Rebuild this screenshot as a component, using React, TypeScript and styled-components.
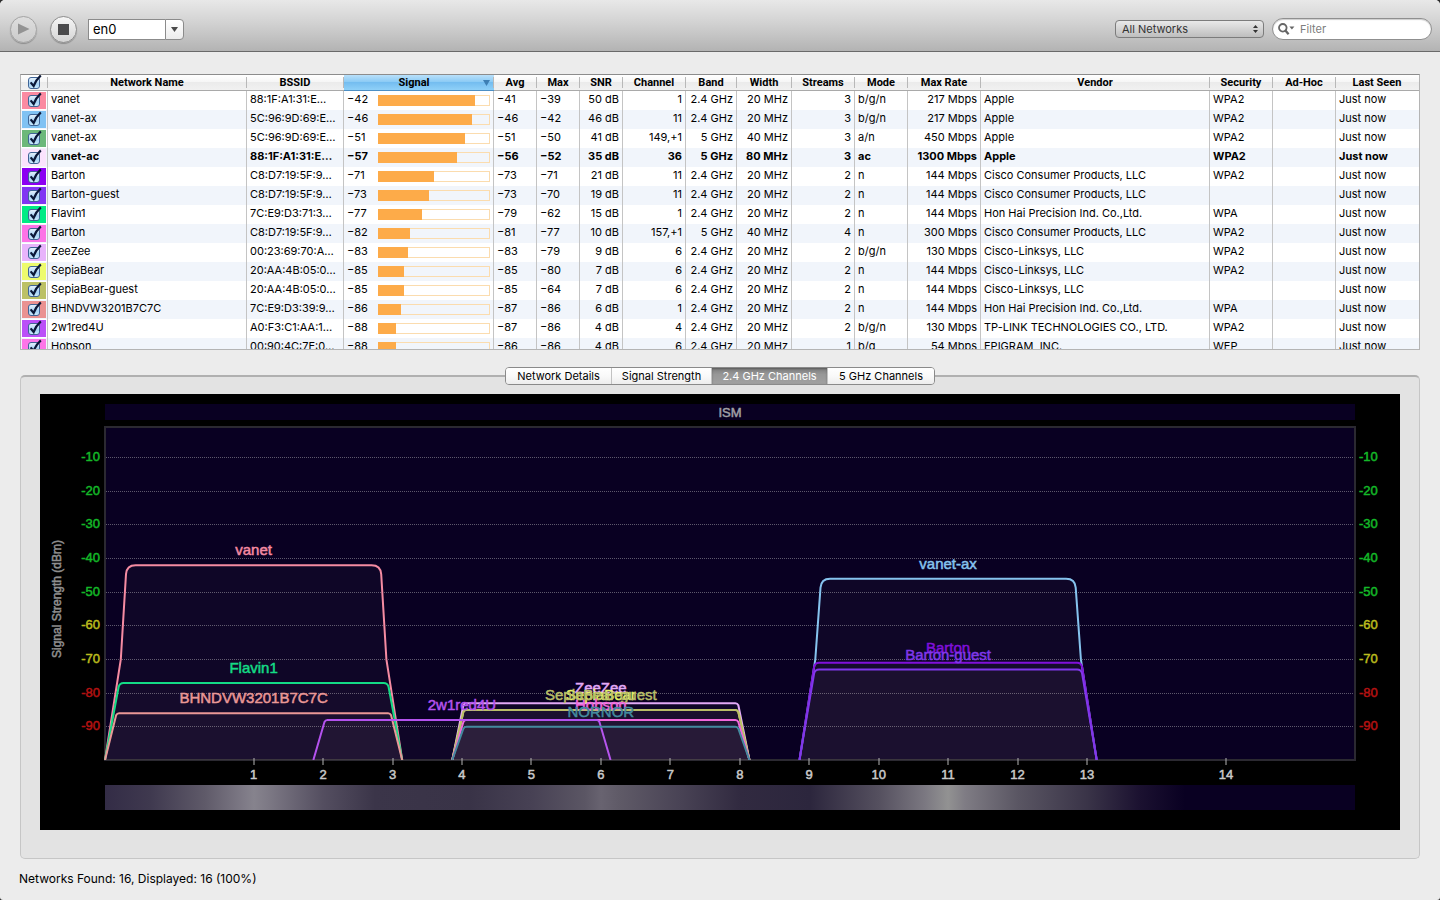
import React from "react";
import styled, { createGlobalStyle, css } from "styled-components";

const UI_FONT = 'Inter, "Noto Sans", sans-serif';
const HEAD_FONT = 'Roboto, "Noto Sans", sans-serif';
const CHART_FONT = '"Liberation Sans", Arial, sans-serif';

const GlobalStyle = createGlobalStyle`
  *, *::before, *::after { box-sizing: border-box; }
  html { background: #2b2b2b; }
  body { margin: 0; font-family: ${UI_FONT}; font-size: 11px; color: #000; }
  button, input, select { font: inherit; color: inherit; margin: 0; }
`;

const Window = styled.div`
  min-height: 100vh;
  display: flex;
  flex-direction: column;
  background: #ececec;
  border-radius: 5px 5px 3px 3px;
  overflow: hidden;
`;

const Toolbar = styled.header`
  height: 52px;
  padding: 7px 8px 0 10px;
  display: flex;
  align-items: center;
  justify-content: space-between;
  background: linear-gradient(#e8e8e8, #d2d2d2 45%, #b3b3b3);
  border-bottom: 1px solid #6a6a6a;
`;

const ToolGroup = styled.div<{ $gap: number }>`
  display: flex;
  align-items: center;
  gap: ${(p) => p.$gap}px;
`;

const RoundButton = styled.button`
  width: 27px;
  height: 27px;
  padding: 0;
  display: grid;
  place-items: center;
  border: 1px solid #8e8e8e;
  border-radius: 50%;
  background: linear-gradient(#f6f6f6, #d4d4d4);
  box-shadow: 0 1px 1px rgba(0, 0, 0, 0.25);
  &:disabled {
    border-color: #a4a4a4;
    background: linear-gradient(#dedede, #cbcbcb);
  }
`;

const ComboBox = styled.div`
  display: flex;
  height: 21px;
  margin-left: -2px;
`;

const ComboInput = styled.input`
  width: 77px;
  padding: 0 4px;
  border: 1px solid #8b8b8b;
  border-right: 0;
  border-radius: 0;
  background: #fff;
  font-size: 13px;
  outline: 0;
`;

const ComboButton = styled.button`
  width: 19px;
  padding: 0;
  display: grid;
  place-items: center;
  border: 1px solid #8b8b8b;
  border-radius: 0 4px 4px 0;
  background: linear-gradient(#fff, #ececec);
`;

const SelectWrap = styled.div`
  position: relative;
  display: flex;
  svg {
    position: absolute;
    right: 6px;
    top: 5px;
    pointer-events: none;
  }
`;

const PopUp = styled.select`
  width: 149px;
  height: 18px;
  padding: 0 6px;
  appearance: none;
  border: 1px solid #7c7c7c;
  border-radius: 4px;
  background: linear-gradient(#e9e9e9, #bebebe);
  color: #333;
  outline: 0;
`;

const SearchField = styled.label`
  width: 160px;
  height: 22px;
  padding: 0 8px 0 5px;
  display: flex;
  align-items: center;
  gap: 5px;
  border: 1px solid #8f8f8f;
  border-radius: 11px;
  background: #fff;
  box-shadow: inset 0 1px 1px rgba(0, 0, 0, 0.2);
`;

const SearchInput = styled.input`
  min-width: 0;
  flex: 1;
  padding: 0;
  border: 0;
  background: none;
  outline: 0;
  &::placeholder { color: #7d7d7d; opacity: 1; }
`;

const Content = styled.main`
  flex: 1;
  padding: 22px 20px 0;
  display: flex;
  flex-direction: column;
`;

const TableFrame = styled.div`
  height: 276px;
  overflow: hidden;
  border: 1px solid #b4b4b4;
  border-top-color: #8c8c8c;
  background: #fff;
`;

const Table = styled.table`
  width: 100%;
  table-layout: fixed;
  border-collapse: separate;
  border-spacing: 0;
  line-height: 16px;
`;

const Col = styled.col<{ $w?: number }>`
  ${(p) => p.$w && css`width: ${p.$w}px;`}
`;

const HeadCell = styled.th<{ $sorted?: boolean }>`
  position: relative;
  height: 16px;
  padding: 0 1px 0 0;
  line-height: 15px;
  font-family: ${HEAD_FONT};
  font-weight: 700;
  text-align: center;
  border-bottom: 1px solid #a9a9a9;
  background: linear-gradient(#fff, #f6f6f6 45%, #ebebeb 50%, #f1f1f1);
  &:not(:last-child)::after {
    content: "";
    position: absolute;
    right: 0;
    top: 2px;
    bottom: 2px;
    width: 1px;
    background: #b8b8b8;
  }
  ${(p) =>
    p.$sorted &&
    css`
      padding-right: 10px;
      border-bottom-color: #4d8fc4;
      background: linear-gradient(#b9e0fa, #8ccbf5 45%, #74bdf0 50%, #8fd0f8);
    `}
  svg.sort {
    position: absolute;
    right: 4px;
    top: 5px;
  }
`;

const Row = styled.tr<{ $current?: boolean }>`
  font-weight: ${(p) => (p.$current ? 700 : 400)};
  &:nth-child(even) { background: #f1f5fb; }
`;

const Cell = styled.td<{ $end?: boolean }>`
  height: 19px;
  padding: 0 3px 3px;
  white-space: nowrap;
  overflow: hidden;
  text-overflow: ellipsis;
  text-align: ${(p) => (p.$end ? "right" : "left")};
  border-right: 1px solid #c4c4c4;
  &:first-child { padding: 1px; }
  &:last-child { border-right: 0; }
`;

const Swatch = styled.div<{ $color: string }>`
  height: 17px;
  padding: 3px 6px;
  background: ${(p) => p.$color};
`;

const CheckBox = styled.label`
  position: relative;
  display: block;
  width: 12px;
  height: 12px;
  margin: 0 auto;
  svg {
    position: absolute;
    left: 0;
    top: -3px;
    pointer-events: none;
  }
`;

const CheckInput = styled.input`
  display: block;
  width: 12px;
  height: 12px;
  appearance: none;
  border: 1px solid #3f6496;
  border-radius: 3px;
  background: linear-gradient(#e4f1fc, #a6d2f5 60%, #c9eafd);
`;

const Signal = styled.div`
  display: grid;
  grid-template-columns: 31px 1fr;
  align-items: center;
`;

const Meter = styled.div`
  height: 11px;
  margin-top: 3px;
  border: 1px solid #fbdcae;
`;

const MeterFill = styled.div`
  height: 11px;
  margin: -1px;
  background: #fdab49;
`;

const TabBar = styled.div`
  position: relative;
  align-self: center;
  display: flex;
  height: 18px;
  margin: 17px 0 -10px;
  border: 1px solid #8a8a8a;
  border-radius: 4px;
  overflow: hidden;
`;

const Tab = styled.button<{ $w: number; $active?: boolean }>`
  width: ${(p) => p.$w}px;
  padding: 0;
  border: 0;
  line-height: 16px;
  background: linear-gradient(#fff, #f9f9f9 50%, #ededed);
  & + & { border-left: 1px solid #c2c2c2; }
  ${(p) =>
    p.$active &&
    css`
      && { border-left-color: #777; }
      color: #fff;
      background: linear-gradient(#7d7d7d, #979797 40%, #a0a0a0);
      box-shadow: inset 0 1px 2px rgba(0, 0, 0, 0.3);
    `}
`;

const Panel = styled.section`
  padding: 17px 19px 28px;
  border: 1px solid #c6c6c6;
  border-top: 2px solid #b0b0b0;
  border-radius: 5px;
  background: #e3e3e3;
`;

const ChartSvg = styled.svg`
  display: block;
  width: 100%;
  height: auto;
  background: #000;
  font-family: ${CHART_FONT};
  font-size: 13px;
`;

/* Label whose outline takes its own colour, for a medium weight. */
const ChartLabel = styled.text<{ $color: string }>`
  fill: ${(p) => p.$color};
  stroke: ${(p) => p.$color};
  stroke-width: 0.5px;
`;

const Status = styled.footer`
  padding: 10px 19px 0;
  height: 41px;
  font-size: 12px;
  line-height: 20px;
`;

type Network = [
  color: string, name: string, bssid: string, signal: number, level: number, avg: number, max: number,
  snr: number, channel: string, band: string, width: number, streams: number, mode: string,
  rate: number, vendor: string, security: string
];

const CISCO = "Cisco Consumer Products, LLC";
const HON_HAI = "Hon Hai Precision Ind. Co.,Ltd.";

const networks: Network[] = [
  ["#fb8ba1", "vanet", "88:1F:A1:31:E…", -42, 97, -41, -39, 50, "1", "2.4", 20, 3, "b/g/n", 217, "Apple", "WPA2"],
  ["#80c2f3", "vanet-ax", "5C:96:9D:69:E…", -46, 94, -46, -42, 46, "11", "2.4", 20, 3, "b/g/n", 217, "Apple", "WPA2"],
  ["#6cb87a", "vanet-ax", "5C:96:9D:69:E…", -51, 87, -51, -50, 41, "149,+1", "5", 40, 3, "a/n", 450, "Apple", "WPA2"],
  ["#fbe3fd", "vanet-ac", "88:1F:A1:31:E…", -57, 79, -56, -52, 35, "36", "5", 80, 3, "ac", 1300, "Apple", "WPA2"],
  ["#8c00f2", "Barton", "C8:D7:19:5F:9…", -71, 56, -73, -71, 21, "11", "2.4", 20, 2, "n", 144, CISCO, "WPA2"],
  ["#8134f3", "Barton-guest", "C8:D7:19:5F:9…", -73, 51, -73, -70, 19, "11", "2.4", 20, 2, "n", 144, CISCO, ""],
  ["#00eb84", "Flavin1", "7C:E9:D3:71:3…", -77, 44, -79, -62, 15, "1", "2.4", 20, 2, "n", 144, HON_HAI, "WPA"],
  ["#fc73e6", "Barton", "C8:D7:19:5F:9…", -82, 32, -81, -77, 10, "157,+1", "5", 40, 4, "n", 300, CISCO, "WPA2"],
  ["#e8b4fb", "ZeeZee", "00:23:69:70:A…", -83, 30, -83, -79, 9, "6", "2.4", 20, 2, "b/g/n", 130, "Cisco-Linksys, LLC", "WPA2"],
  ["#edfb6c", "SepiaBear", "20:AA:4B:05:0…", -85, 26, -85, -80, 7, "6", "2.4", 20, 2, "n", 144, "Cisco-Linksys, LLC", "WPA2"],
  ["#bcc166", "SepiaBear-guest", "20:AA:4B:05:0…", -85, 26, -85, -64, 7, "6", "2.4", 20, 2, "n", 144, "Cisco-Linksys, LLC", ""],
  ["#ea9292", "BHNDVW3201B7C7C", "7C:E9:D3:39:9…", -86, 23, -87, -86, 6, "1", "2.4", 20, 2, "n", 144, HON_HAI, "WPA"],
  ["#bb50f8", "2w1red4U", "A0:F3:C1:AA:1…", -88, 18, -87, -86, 4, "4", "2.4", 20, 2, "b/g/n", 130, "TP-LINK TECHNOLOGIES CO., LTD.", "WPA2"],
  ["#fd75e8", "Hobson", "00:90:4C:7E:0…", -88, 18, -86, -86, 4, "6", "2.4", 20, 1, "b/g", 54, "EPIGRAM, INC.", "WEP"],
];

const columns: { label: string; w?: number }[] = [
  { label: "Network Name", w: 199 },
  { label: "BSSID", w: 97 },
  { label: "Signal", w: 150 },
  { label: "Avg", w: 43 },
  { label: "Max", w: 43 },
  { label: "SNR", w: 43 },
  { label: "Channel", w: 63 },
  { label: "Band", w: 51 },
  { label: "Width", w: 55 },
  { label: "Streams", w: 63 },
  { label: "Mode", w: 53 },
  { label: "Max Rate", w: 73 },
  { label: "Vendor" },
  { label: "Security", w: 63 },
  { label: "Ad-Hoc", w: 63 },
  { label: "Last Seen", w: 83 },
];

const minus = (n: number) => String(n).replace("-", "−");

function Check({ label }: { label: string }) {
  return (
    <CheckBox>
      <CheckInput type="checkbox" defaultChecked aria-label={label} />
      <svg width="14" height="14" viewBox="0 0 14 14">
        <path d="M2.6 8.4 L5.6 12 Q7.8 6 12.8 1.4" fill="none" stroke="#0b1838" strokeWidth="2.2" />
      </svg>
    </CheckBox>
  );
}

function NetworkTable() {
  return (
    <TableFrame>
      <Table>
        <colgroup>
          <Col $w={27} />
          {columns.map((c) => <Col key={c.label} $w={c.w} />)}
        </colgroup>
        <thead>
          <tr>
            <HeadCell><Check label="Show all networks" /></HeadCell>
            {columns.map((c) => (
              <HeadCell key={c.label} $sorted={c.label === "Signal"}>
                {c.label}
                {c.label === "Signal" && (
                  <svg className="sort" width="7" height="6" viewBox="0 0 7 6">
                    <path d="M0 0 H7 L3.5 6 Z" fill="#3d7fb4" />
                  </svg>
                )}
              </HeadCell>
            ))}
          </tr>
        </thead>
        <tbody>
          {networks.map(([color, name, bssid, signal, level, avg, max, snr, channel, band, width, streams, mode, rate, vendor, security], i) => (
            <Row key={i} $current={name === "vanet-ac"}>
              <Cell><Swatch $color={color}><Check label={`Show ${name}`} /></Swatch></Cell>
              <Cell>{name}</Cell>
              <Cell>{bssid}</Cell>
              <Cell>
                <Signal>
                  {minus(signal)}
                  <Meter><MeterFill style={{ width: level }} /></Meter>
                </Signal>
              </Cell>
              <Cell>{minus(avg)}</Cell>
              <Cell>{minus(max)}</Cell>
              <Cell $end>{snr} dB</Cell>
              <Cell $end>{channel}</Cell>
              <Cell $end>{band} GHz</Cell>
              <Cell $end>{width} MHz</Cell>
              <Cell $end>{streams}</Cell>
              <Cell>{mode}</Cell>
              <Cell $end>{rate} Mbps</Cell>
              <Cell>{vendor}</Cell>
              <Cell>{security}</Cell>
              <Cell />
              <Cell>Just now</Cell>
            </Row>
          ))}
        </tbody>
      </Table>
    </TableFrame>
  );
}

/* Chart geometry, in the units of the drawing's view box. */
const PLOT = { left: 65, right: 1315, top: 33, bottom: 366 };
const yOf = (dbm: number) => 29.8 - 3.366 * dbm;
const xOf = (channel: number) => 213.6 + 69.45 * ((channel === 14 ? 15 : channel) - 1);

const traces: { name: string; color: string; channel: number; dbm: number }[] = [
  { name: "vanet", color: "#f58ba2", channel: 1, dbm: -42 },
  { name: "vanet-ax", color: "#86c3ee", channel: 11, dbm: -46 },
  { name: "Barton", color: "#8010da", channel: 11, dbm: -71 },
  { name: "Barton-guest", color: "#8038ea", channel: 11, dbm: -73 },
  { name: "Flavin1", color: "#14dc86", channel: 1, dbm: -77 },
  { name: "ZeeZee", color: "#e2a9f6", channel: 6, dbm: -83 },
  { name: "SepiaBear", color: "#e6f268", channel: 6, dbm: -85 },
  { name: "SepiaBear-guest", color: "#b9be68", channel: 6, dbm: -85 },
  { name: "BHNDVW3201B7C7C", color: "#ea9896", channel: 1, dbm: -86 },
  { name: "Hobson", color: "#f268dc", channel: 6, dbm: -88 },
  { name: "2w1red4U", color: "#b452ee", channel: 4, dbm: -88 },
  { name: "NORNOR", color: "#438a9e", channel: 6, dbm: -90 },
];

function tracePath(channel: number, dbm: number) {
  const c = xOf(channel);
  const top = yOf(dbm);
  const strong = dbm > -70;
  const edge = strong ? 127 : dbm > -75 ? 133 : dbm > -80 ? 134 : 136.5;
  const r = strong ? 9 : dbm > -80 ? 4 : 2;
  const side = (s: number) => (strong ? `${c + s * 132.8} ${yOf(-70)}` : "");
  const lean = strong ? 0.6 : 1;
  return [
    `M${c - 148.6} ${PLOT.bottom}`,
    strong ? `L${side(-1)}` : "",
    `L${c - edge - lean} ${top + r} Q${c - edge} ${top} ${c - edge + r} ${top}`,
    `H${c + edge - r} Q${c + edge} ${top} ${c + edge + lean} ${top + r}`,
    strong ? `L${side(1)}` : "",
    `L${c + 148.6} ${PLOT.bottom}`,
  ].join(" ");
}

const levels = [-10, -20, -30, -40, -50, -60, -70, -80, -90];
const levelColor = (dbm: number) => (dbm >= -50 ? "#14b828" : dbm >= -70 ? "#bcbc1e" : "#b41212");

const heat: [number, string][] = [
  [65, "#332c46"], [110, "#3f394f"], [165, "#5f5a69"], [205, "#7f7b87"], [214, "#86838d"], [228, "#7d7985"],
  [283, "#544e60"], [335, "#3b3549"], [430, "#393347"], [491, "#474154"], [545, "#5b5664"], [561, "#686370"],
  [580, "#5f5a67"], [640, "#494355"], [700, "#312a40"], [770, "#2c263d"], [839, "#55505f"], [885, "#7b7881"],
  [908, "#929292"], [925, "#7f7c84"], [978, "#5a5663"], [1047, "#3a3448"], [1100, "#1b1130"], [1145, "#090022"],
  [1315, "#090022"],
];

function ChannelChart() {
  const span = PLOT.right - PLOT.left;
  return (
    <ChartSvg viewBox="0 0 1360 436" role="img" aria-label="2.4 GHz channels">
      <defs>
        <linearGradient id="heat">
          {heat.map(([x, color]) => <stop key={x} offset={(x - PLOT.left) / span} stopColor={color} />)}
        </linearGradient>
        <clipPath id="plot"><rect x={64} y={PLOT.top} width={span + 1} height={333} /></clipPath>
      </defs>
      <rect x={65} y={10} width={span} height={16} fill="#090022" />
      <ChartLabel x={690} y={23} textAnchor="middle" $color="#a0a0a6">ISM</ChartLabel>
      <rect x={65} y={33} width={span} height={333} fill="#090022" stroke="#2b2931" strokeWidth={2} />
      {levels.map((l) => {
        const y = Math.floor(yOf(l));
        return (
          <g key={l}>
            <path d={`M66 ${y + 0.5} H1314`} stroke="#5d586c" strokeDasharray="1 1" />
            <ChartLabel x={60} y={y + 4} textAnchor="end" $color={levelColor(l)}>{l}</ChartLabel>
            <ChartLabel x={1319} y={y + 4} $color={levelColor(l)}>{l}</ChartLabel>
          </g>
        );
      })}
      <g clipPath="url(#plot)">
        {traces.map((t) => (
          <path
            key={t.name}
            d={tracePath(t.channel, t.dbm)}
            fill="rgba(255, 225, 225, 0.028)"
            stroke={t.color}
            strokeWidth={2}
          />
        ))}
      </g>
      <g fontSize={15} textAnchor="middle">
        {traces.map((t) => (
          <ChartLabel key={t.name} x={xOf(t.channel)} y={Math.round(yOf(t.dbm)) - 10} $color={t.color}>
            {t.name}
          </ChartLabel>
        ))}
      </g>
      {Array.from({ length: 14 }, (_, i) => i + 1).map((ch) => (
        <g key={ch}>
          <path d={`M${Math.round(xOf(ch))} 364 V371`} stroke="#b4b4b4" />
          <ChartLabel x={xOf(ch)} y={385} textAnchor="middle" $color="#cacaca">{ch}</ChartLabel>
        </g>
      ))}
      <ChartLabel transform="translate(21 205) rotate(-90)" textAnchor="middle" fontSize={12} $color="#8e8e8e">
        Signal Strength (dBm)
      </ChartLabel>
      <rect x={65} y={391} width={span} height={25} fill="url(#heat)" />
    </ChartSvg>
  );
}

export default function App() {
  return (
    <>
      <GlobalStyle />
      <Window>
        <Toolbar>
          <ToolGroup $gap={13}>
            <RoundButton disabled aria-label="Start scanning">
              <svg width="13" height="12" viewBox="0 0 13 12"><path d="M1 0.5 L12.5 6 L1 11.5 Z" fill="#939393" /></svg>
            </RoundButton>
            <RoundButton aria-label="Stop scanning">
              <svg width="11" height="11" viewBox="0 0 11 11"><rect width="11" height="11" fill="#4b4b4d" /></svg>
            </RoundButton>
            <ComboBox>
              <ComboInput defaultValue="en0" aria-label="Interface" />
              <ComboButton aria-label="Choose interface">
                <svg width="7" height="5" viewBox="0 0 7 5"><path d="M0 0 H7 L3.5 5 Z" fill="#4a4a4a" /></svg>
              </ComboButton>
            </ComboBox>
          </ToolGroup>
          <ToolGroup $gap={8}>
            <SelectWrap>
              <PopUp aria-label="Network filter" defaultValue="all">
                <option value="all">All Networks</option>
              </PopUp>
              <svg width="5" height="8" viewBox="0 0 5 8">
                <path d="M0 3 L2.5 0 L5 3 Z M0 5 L2.5 8 L5 5 Z" fill="#333" />
              </svg>
            </SelectWrap>
            <SearchField>
              <svg width="17" height="12" viewBox="0 0 17 12">
                <circle cx="4.8" cy="4.8" r="3.8" fill="none" stroke="#666" strokeWidth="1.8" />
                <path d="M7.4 7.6 L10.6 11.2" stroke="#666" strokeWidth="2.3" />
                <path d="M11.4 3.6 H16.4 L13.9 6.6 Z" fill="#666" />
              </svg>
              <SearchInput placeholder="Filter" aria-label="Filter" />
            </SearchField>
          </ToolGroup>
        </Toolbar>
        <Content>
          <NetworkTable />
          <TabBar role="tablist">
            <Tab role="tab" $w={105}>Network Details</Tab>
            <Tab role="tab" $w={100}>Signal Strength</Tab>
            <Tab role="tab" $w={116} $active aria-selected>2.4 GHz Channels</Tab>
            <Tab role="tab" $w={107}>5 GHz Channels</Tab>
          </TabBar>
          <Panel>
            <ChannelChart />
          </Panel>
        </Content>
        <Status>Networks Found: 16, Displayed: 16 (100%)</Status>
      </Window>
    </>
  );
}
